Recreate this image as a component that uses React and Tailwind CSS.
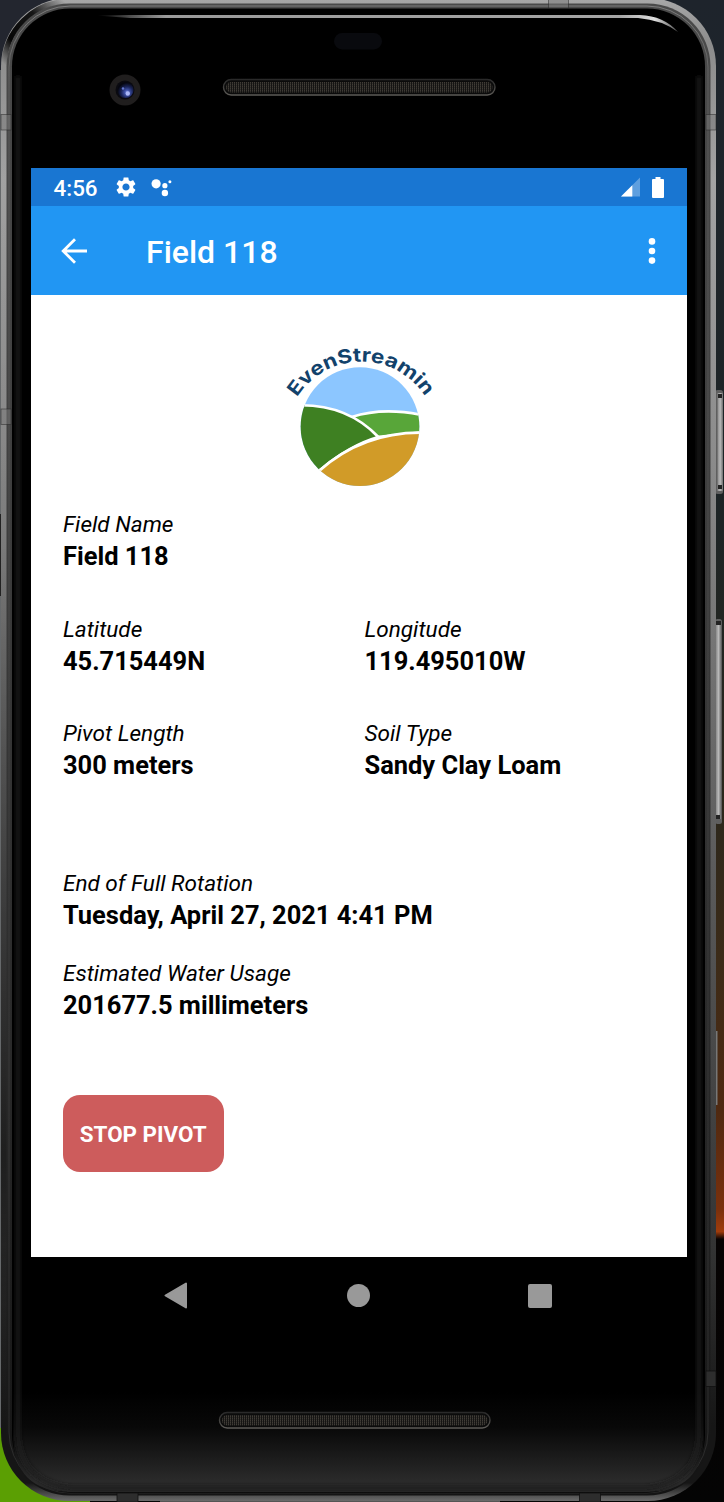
import React from "react";

function Speaker({ x, y, w }) {
  return (
    <g>
      <rect x={x + 0.5} y={y + 0.5} width={w - 1} height="15.5" rx="7.7" fill="#0b0b0b" stroke="url(#slotEdge)" strokeWidth="1.4" />
      <rect x={x + 3} y={y + 3} width={w - 6} height="10.5" rx="5" fill="url(#mesh)" />
    </g>
  );
}

function PhoneFrame() {
  return (
    <svg className="absolute inset-0" width="724" height="1502" viewBox="0 0 724 1502" aria-hidden="true">
      <defs>
        <linearGradient id="wall" x1="0" y1="0" x2="0" y2="1">
          <stop offset="0" stopColor="#1e242c" />
          <stop offset="0.35" stopColor="#1d2425" />
          <stop offset="0.53" stopColor="#2b271c" />
          <stop offset="0.64" stopColor="#3c2b18" />
          <stop offset="0.74" stopColor="#4f2911" />
          <stop offset="0.805" stopColor="#7a300c" />
          <stop offset="0.82" stopColor="#a03c0c" />
          <stop offset="0.825" stopColor="#060303" />
          <stop offset="1" stopColor="#040404" />
        </linearGradient>
        <linearGradient id="rim" x1="0" y1="0" x2="0" y2="1">
          <stop offset="0" stopColor="#a8a8a8" />
          <stop offset="0.03" stopColor="#8c8c8c" />
          <stop offset="0.12" stopColor="#a3a3a3" />
          <stop offset="0.3" stopColor="#8c8c8c" />
          <stop offset="0.5" stopColor="#686868" />
          <stop offset="0.65" stopColor="#505050" />
          <stop offset="0.83" stopColor="#343434" />
          <stop offset="0.95" stopColor="#161616" />
          <stop offset="0.988" stopColor="#161616" />
          <stop offset="1" stopColor="#6b6b6b" />
        </linearGradient>
        <linearGradient id="rimInner" x1="0" y1="0" x2="0" y2="1">
          <stop offset="0" stopColor="#4a4a4a" />
          <stop offset="0.3" stopColor="#404040" />
          <stop offset="0.7" stopColor="#2a2a2a" />
          <stop offset="1" stopColor="#141414" />
        </linearGradient>
        <linearGradient id="rimLine" x1="0" y1="0" x2="0" y2="1">
          <stop offset="0" stopColor="#a0a0a0" stopOpacity="0.6" />
          <stop offset="0.06" stopColor="#808080" stopOpacity="0.35" />
          <stop offset="0.6" stopColor="#555" stopOpacity="0.3" />
          <stop offset="1" stopColor="#555" stopOpacity="0.35" />
        </linearGradient>
        <linearGradient id="leftShade" x1="0" y1="0" x2="0" y2="1">
          <stop offset="0" stopColor="#000" stopOpacity="0" />
          <stop offset="0.35" stopColor="#000" stopOpacity="0.05" />
          <stop offset="0.8" stopColor="#000" stopOpacity="0.5" />
          <stop offset="1" stopColor="#000" stopOpacity="0" />
        </linearGradient>
        <linearGradient id="cornerShade" gradientUnits="userSpaceOnUse" x1="4" y1="64" x2="66" y2="3">
          <stop offset="0" stopColor="#060606" stopOpacity="0" />
          <stop offset="0.25" stopColor="#060606" />
          <stop offset="0.65" stopColor="#161616" />
          <stop offset="1" stopColor="#222" stopOpacity="0" />
        </linearGradient>
        <linearGradient id="chin" x1="0" y1="0" x2="0" y2="1">
          <stop offset="0" stopColor="#000" />
          <stop offset="0.35" stopColor="#080808" />
          <stop offset="0.9" stopColor="#2b2b2b" />
          <stop offset="1" stopColor="#262626" />
        </linearGradient>
        <linearGradient id="sheen" x1="0" y1="0" x2="1" y2="0">
          <stop offset="0" stopColor="#a6a6a6" stopOpacity="0" />
          <stop offset="0.12" stopColor="#9a9a9a" />
          <stop offset="0.9" stopColor="#a5a5a5" />
          <stop offset="0.96" stopColor="#dedede" />
          <stop offset="1" stopColor="#555" />
        </linearGradient>
        <linearGradient id="slotEdge" x1="0" y1="0" x2="0" y2="1">
          <stop offset="0" stopColor="#2a2a2a" />
          <stop offset="1" stopColor="#5c5a56" />
        </linearGradient>
        <linearGradient id="key" x1="0" y1="0" x2="1" y2="0">
          <stop offset="0" stopColor="#8a8a8a" />
          <stop offset="0.5" stopColor="#b8b8b8" />
          <stop offset="1" stopColor="#6f6f6f" />
        </linearGradient>
        <radialGradient id="lens" cx="0.6" cy="0.65" r="0.6">
          <stop offset="0" stopColor="#8494e8" />
          <stop offset="0.25" stopColor="#4052a8" />
          <stop offset="0.6" stopColor="#1a2458" />
          <stop offset="1" stopColor="#05060f" />
        </radialGradient>
        <pattern id="mesh" width="2" height="2" patternUnits="userSpaceOnUse">
          <rect width="2" height="2" fill="#151413" />
          <rect width="1" height="2" fill="#312f2b" />
          <rect width="1" height="1" fill="#403c36" />
        </pattern>
        <filter id="soft" x="-20%" y="-5%" width="140%" height="110%">
          <feGaussianBlur stdDeviation="2" />
        </filter>
      </defs>

      <rect width="724" height="1502" fill="url(#wall)" />
      <rect width="80" height="74" fill="#23262f" />
      <rect x="0" y="70" width="2" height="1358" fill="#66696b" />
      <rect x="0" y="514" width="1.2" height="82" fill="#222" />
      <rect y="1428" width="90" height="74" fill="#5b9f03" />
      <rect x="160" y="1490" width="340" height="12" fill="#555" />

      {/* side keys */}
      <rect x="715" y="390" width="8" height="104" rx="2.5" fill="#5f5f5f" />
      <rect x="717.5" y="393" width="5.5" height="98" fill="url(#key)" />
      <rect x="718" y="394" width="4" height="4" fill="#222" />
      <rect x="718" y="485" width="4" height="4" fill="#222" />
      <rect x="715" y="619" width="7" height="205" rx="2.5" fill="#5f5f5f" />
      <rect x="716" y="622" width="5" height="197" fill="url(#key)" />
      <rect x="716" y="621" width="5" height="4" fill="#222" />
      <rect x="716" y="815" width="4" height="4" fill="#222" />
      <rect x="715" y="1031" width="2.5" height="74" fill="#777" />

      {/* metal body */}
      <rect x="1" y="-2" width="715" height="1503" rx="68" fill="url(#rim)" />
      <rect x="1" y="75" width="8" height="1350" fill="url(#leftShade)" />
      <path d="M4 66 A66 66 0 0 1 69 1.5" fill="none" stroke="url(#cornerShade)" strokeWidth="5.5" />
      <rect x="6.5" y="3.5" width="704" height="1492" rx="63" fill="url(#rimInner)" />
      <rect x="9" y="6" width="699" height="1487" rx="61" fill="none" stroke="url(#rimLine)" strokeWidth="1" />
      <rect x="12" y="8.5" width="693" height="1484" rx="58" fill="#000" />
      <path d="M13 1392 H704 V1434 Q704 1492 646 1492 H71 Q13 1492 13 1434 Z" fill="url(#chin)" />
      <path d="M18 76 V1434 Q20 1482 71 1488 H646 Q698 1482 699 1434 V76" fill="none" stroke="#1e1e1e" strokeWidth="4" filter="url(#soft)" />

      {/* antenna bands */}
      <g fill="#777" fillOpacity="0.5" stroke="#222" strokeOpacity="0.6" strokeWidth="0.8">
        <rect x="1" y="114.5" width="10" height="15.5" />
        <rect x="706" y="114.5" width="10" height="15.5" />
        <rect x="1" y="409" width="10" height="15.5" />
        <rect x="548.5" y="-1" width="20" height="9" />
      </g>
      <g fill="#2d2d2d" stroke="#111" strokeWidth="0.8">
        <rect x="706" y="1371" width="10" height="15.5" />
        <rect x="117" y="1493" width="21" height="9" />
        <rect x="579.5" y="1493" width="21" height="9" />
      </g>

      {/* glass highlight */}
      <path d="M96 15.5 L130 15 H640 Q664 16 678 32 Q662 20 638 18 H130 Z" fill="url(#sheen)" />

      <rect x="334" y="33" width="48" height="16.5" rx="8.2" fill="#090a0e" />
      <circle cx="125" cy="90" r="15.5" fill="#201e1e" />
      <circle cx="125" cy="90" r="9.5" fill="#0a0a10" />
      <circle cx="125.5" cy="90" r="8" fill="url(#lens)" />
      <circle cx="123" cy="88.5" r="1.2" fill="#6578d0" />
      <circle cx="127.8" cy="93.5" r="2.2" fill="#aab6f5" />
      <Speaker x={223} y={79} w={272.5} />
      <Speaker x={219} y={1412} w={271.5} />
    </svg>
  );
}

function Logo() {
  return (
    <svg className="ml-[239px] mt-10 block h-40 w-[180px]" viewBox="0 0 540 480" role="img" aria-label="EvenStreamin">
      <defs>
        <clipPath id="disc">
          <circle cx="270" cy="275" r="178" />
        </clipPath>
        <path id="arc" d="M 80 189 A 227 227 0 0 1 468 189" />
      </defs>
      <g clipPath="url(#disc)">
        <rect x="80" y="80" width="380" height="400" fill="#8cc6ff" />
        <path d="M245 246 Q340 215 460 241 V292 L320 306 Z" fill="#58a639" stroke="#fff" strokeWidth="8" />
        <path d="M80 211 Q230 206 325 306 Q240 330 150 405 L80 440 Z" fill="#3e8022" stroke="#fff" strokeWidth="8" />
        <path d="M148 407 Q280 290 460 293 V480 H150 Z" fill="#d19b28" stroke="#fff" strokeWidth="8" />
      </g>
      <text fill="#12426b" fontSize="58" fontWeight="700" fontFamily="Inter, sans-serif">
        <textPath href="#arc" startOffset="2" textLength="458" lengthAdjust="spacingAndGlyphs">EvenStreamin</textPath>
      </text>
    </svg>
  );
}

function StatusBar() {
  return (
    <div className="flex h-[38px] items-center bg-[#1976d2] pl-[22.5px] text-white">
      <span className="w-[60.5px] pt-[2px] text-[22.4px] leading-none font-medium">4:56</span>
      <svg className="h-6 w-6" viewBox="0 0 24 24" fill="currentColor">
        <path d="M19.14 12.94c.04-.3.06-.61.06-.94 0-.32-.02-.64-.07-.94l2.03-1.58c.18-.14.23-.41.12-.61l-1.92-3.32c-.12-.22-.37-.29-.59-.22l-2.39.96c-.5-.38-1.03-.7-1.62-.94l-.36-2.54c-.04-.24-.24-.41-.48-.41h-3.84c-.24 0-.43.17-.47.41l-.36 2.54c-.59.24-1.13.57-1.62.94l-2.39-.96c-.22-.08-.47 0-.59.22L2.74 8.87c-.12.21-.08.47.12.61l2.03 1.58c-.05.3-.09.63-.09.94s.02.64.07.94l-2.03 1.58c-.18.14-.23.41-.12.61l1.92 3.32c.12.22.37.29.59.22l2.39-.96c.5.38 1.03.7 1.62.94l.36 2.54c.05.24.24.41.48.41h3.84c.24 0 .44-.17.47-.41l.36-2.54c.59-.24 1.13-.56 1.62-.94l2.39.96c.22.08.47 0 .59-.22l1.92-3.32c.12-.22.07-.47-.12-.61l-2.01-1.58zM12 15.6c-1.98 0-3.6-1.62-3.6-3.6s1.62-3.6 3.6-3.6 3.6 1.62 3.6 3.6-1.62 3.6-3.6 3.6z" />
      </svg>
      <svg className="ml-[13px] h-5 w-6" viewBox="0 0 24 20" fill="currentColor">
        <circle cx="5.1" cy="6.8" r="4.6" />
        <circle cx="13.9" cy="8.7" r="2.6" />
        <circle cx="13.9" cy="16" r="3.2" />
        <circle cx="18.9" cy="4.8" r="1.5" />
      </svg>
      <svg className="ml-auto h-5 w-5" viewBox="0 0 20 20" fill="currentColor">
        <path d="M19 0.5V19.5H0Z" opacity="0.3" />
        <path d="M11.3 8.2V19.5H0Z" />
      </svg>
      <svg className="mr-[23px] ml-[11px] h-[21px] w-3" viewBox="0 0 12 21" fill="currentColor">
        <path d="M3.5 0h5v2H11q1 0 1 1v17q0 1-1 1H1q-1 0-1-1V3q0-1 1-1h2.5Z" />
      </svg>
    </div>
  );
}

function AppBar() {
  return (
    <header className="flex h-[89px] items-center bg-[#2196f3] pr-[31px] pl-[30px] text-white">
      <svg className="h-[26px] w-[26px]" viewBox="0 0 26 26" fill="none" stroke="currentColor" strokeWidth="2.8">
        <path d="M26 13H2.5M14 1.2L2.2 13L14 24.8" />
      </svg>
      <h1 className="ml-[59px] pt-[3px] text-[32px] leading-none font-medium">Field 118</h1>
      <svg className="ml-auto h-[26px] w-2" viewBox="0 0 8 26" fill="currentColor">
        <circle cx="4" cy="3.4" r="3.3" />
        <circle cx="4" cy="13" r="3.3" />
        <circle cx="4" cy="22.6" r="3.3" />
      </svg>
    </header>
  );
}

function Field({ label, value }) {
  return (
    <div className="w-[301.5px] whitespace-nowrap">
      <dt className="text-[22.55px] leading-[34px] italic">{label}</dt>
      <dd className="text-[25.45px] leading-[29px] font-bold">{value}</dd>
    </div>
  );
}

export default function App() {
  return (
    <div className="relative h-[1502px] w-[724px] overflow-hidden bg-black font-['Roboto',sans-serif]">
      <PhoneFrame />
      <div className="relative pt-[168px] pl-[31px]">
        <main className="flex h-[1089px] w-[656px] flex-col bg-white text-black">
          <StatusBar />
          <AppBar />
          <Logo />
          <dl className="mt-[13px] flex flex-col pl-8">
            <Field label="Field Name" value="Field 118" />
            <div className="mt-[42px] flex">
              <Field label="Latitude" value="45.715449N" />
              <Field label="Longitude" value="119.495010W" />
            </div>
            <div className="mt-[41px] flex">
              <Field label="Pivot Length" value="300 meters" />
              <Field label="Soil Type" value="Sandy Clay Loam" />
            </div>
            <div className="mt-[87px] flex flex-col gap-[27px]">
              <Field label="End of Full Rotation" value="Tuesday, April 27, 2021 4:41 PM" />
              <Field label="Estimated Water Usage" value="201677.5 millimeters" />
            </div>
          </dl>
          <button className="mt-[75px] ml-8 h-[77px] w-[160.5px] rounded-[17px] bg-[#cd5c5c] pt-[2px] text-[22.4px] font-bold text-white">
            STOP PIVOT
          </button>
        </main>
        <nav className="flex h-[77px] w-[656px] items-center justify-between pr-[135px] pl-[133px]">
          <svg className="h-[27px] w-6" viewBox="0 0 24 27">
            <path d="M22 1.5V25.5L1.5 13.5Z" fill="#999" stroke="#999" strokeWidth="2" strokeLinejoin="round" />
          </svg>
          <span className="h-[23px] w-[23px] rounded-full bg-[#999]" />
          <span className="h-6 w-6 rounded-[2px] bg-[#999]" />
        </nav>
      </div>
    </div>
  );
}
